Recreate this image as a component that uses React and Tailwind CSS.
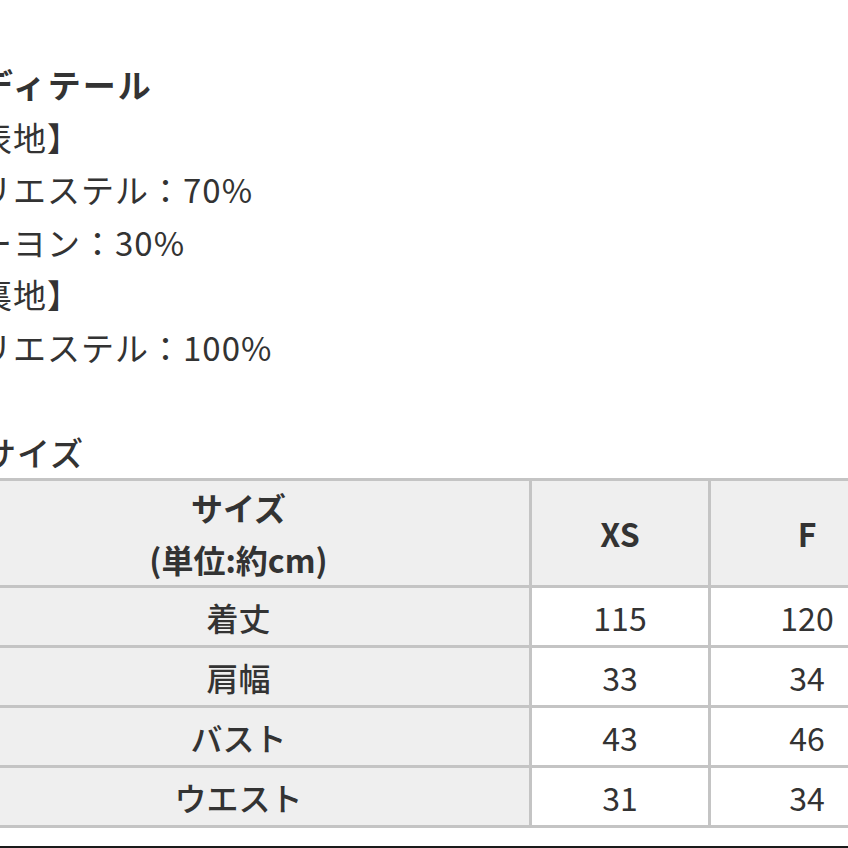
const details = [
  { text: "■ディテール", bold: true },
  { text: "【表地】" },
  { text: "ポリエステル：70%" },
  { text: "レーヨン：30%" },
  { text: "【裏地】" },
  { text: "ポリエステル：100%" },
  { text: "\u00a0" },
];

const rows = [
  { label: "着丈", xs: "115", f: "120" },
  { label: "肩幅", xs: "33", f: "34" },
  { label: "バスト", xs: "43", f: "46" },
  { label: "ウエスト", xs: "31", f: "34" },
];

export default function App() {
  return (
    <div
      className="w-[848px] h-[848px] overflow-hidden bg-white flex flex-col text-[#333]"
      style={{ fontFamily: '"Noto Sans CJK JP", "Noto Sans", sans-serif' }}
    >
      <div className="ml-[-55px] pt-[58px] flex-1">
        <div className="text-[33px] leading-[52.5px] tracking-[1px] whitespace-nowrap">
          {details.map((d, i) => (
            <div key={i} className={d.bold ? "font-bold tracking-[2px]" : ""}>
              {d.text}
            </div>
          ))}
          <div className="font-medium ml-[4px]">■サイズ</div>
        </div>

        <table className="table-fixed border-collapse w-[958px] text-[32px] text-center">
          <colgroup>
            <col className="w-[584px]" />
            <col className="w-[179px]" />
            <col className="w-[195px]" />
          </colgroup>
          <thead>
            <tr className="bg-[#efefef]">
              <th className="border-[3px] border-[#c4c4c4] leading-[52px] font-bold">
                サイズ
                <br />
                (単位:約cm)
              </th>
              <th className="border-[3px] border-[#c4c4c4] font-bold">XS</th>
              <th className="border-[3px] border-[#c4c4c4] font-bold">F</th>
            </tr>
          </thead>
          <tbody>
            {rows.map((r) => (
              <tr key={r.label} className="h-[60px]">
                <td className="border-[3px] border-[#c4c4c4] bg-[#efefef] font-medium">
                  {r.label}
                </td>
                <td className="border-[3px] border-[#c4c4c4] bg-white">{r.xs}</td>
                <td className="border-[3px] border-[#c4c4c4] bg-white">{r.f}</td>
              </tr>
            ))}
          </tbody>
        </table>
      </div>
      <div className="h-[2px] bg-[#1a1a1a]" />
    </div>
  );
}
